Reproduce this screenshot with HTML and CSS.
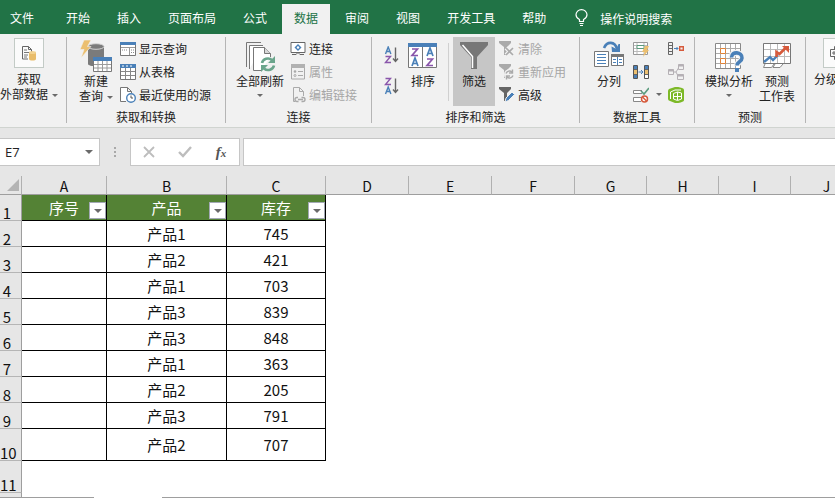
FILE: index.html
```html
<!DOCTYPE html>
<html lang="zh-CN">
<head>
<meta charset="utf-8">
<title>Excel</title>
<link rel="stylesheet" href="styles.css">
</head>
<body>
<nav class="tabs">
  <a class="tab file" href="#">文件</a>
  <a class="tab" href="#">开始</a>
  <a class="tab" href="#">插入</a>
  <a class="tab" href="#">页面布局</a>
  <a class="tab" href="#">公式</a>
  <a class="tab active" href="#">数据</a>
  <a class="tab" href="#">审阅</a>
  <a class="tab" href="#">视图</a>
  <a class="tab" href="#">开发工具</a>
  <a class="tab" href="#">帮助</a>
  <a class="tell" href="#">
    <svg width="13" height="18" viewBox="0 0 13 18" fill="none" stroke="#fff" stroke-width="1.2"><path d="M4.500 12.500v-2C2.500 9.500 1 8 1 5.800A5.300 5 0 0 1 12 5.800C12 8 10.500 9.500 8.500 10.500v2zM4.500 14.500h4M5 16.500h3"/></svg>
    操作说明搜索</a>
</nav>

<div class="ribbon">
  <section class="group g-external">
    <div class="body">
      <button class="big boxed">
        <span class="box"><svg width="16" height="16" viewBox="0 0 16 16" fill="none"><path d="M1.500 1.500h6l3 3v3M7 14H1.500V1.500M7.500 1.500v3h3" stroke="#666"/><path d="M3 5h3M3 7.500h5M3 10h4M3 12h3" stroke="#777"/><path d="M8 7.500v6.500c0 2 7 2 7 0V7.500z" fill="#e9bd6b"/><ellipse cx="11.500" cy="7.500" rx="3.500" ry="1.500" fill="#f3d392"/></svg></span>
        <span>获取</span><span class="nowrap">外部数据<i class="caret"></i></span>
      </button>
    </div>
  </section>

  <section class="group g-query">
    <div class="body">
      <button class="big">
        <svg width="32" height="32" viewBox="0 0 32 32"><path d="M8 6v18c0 3 16 3 16 0V6z" fill="#7b7b7b"/><ellipse cx="16" cy="6.500" rx="8" ry="2.800" fill="#7b7b7b" stroke="#d5d5d5"/><path d="M4 0h7L7.500 6.500H11L1 18l3-8.500H0z" fill="#ebbf70" stroke="#f1f1f1" stroke-width=".6"/><path d="M13.500 17.500h18v14h-18z" fill="#fff" stroke="#787878"/><path d="M13 17h19v4H13z" fill="#4a80b8"/><path d="M14 24.500h17M14 28h17M18 21v10M22.500 21v10M27 21v10" stroke="#9b9b9b"/></svg>
        <span>新建</span><span class="nowrap">查询<i class="caret"></i></span>
      </button>
      <div class="stack">
        <button class="small"><svg width="16" height="16" viewBox="0 0 16 16"><path d="M.5 1.500h15v13H.5z" fill="#fff" stroke="#777"/><path d="M0 1h16v3H0z" fill="#4a80b8"/><path d="M1 6.500h14M9.500 6v8" stroke="#999"/><path d="M11 9h3M11 11.500h3M2 9h5" stroke="#888" stroke-dasharray="1 1"/></svg>显示查询</button>
        <button class="small"><svg width="16" height="16" viewBox="0 0 16 16"><path d="M.5.5h15v15H.5z" fill="#fff" stroke="#777"/><path d="M0 0h16v4H0z" fill="#4a80b8"/><path d="M2 2h12" stroke="#fff" stroke-dasharray="2 2"/><path d="M1 7.500h14M1 11.500h14M5.500 4v11M10.500 4v11" stroke="#888"/></svg>从表格</button>
        <button class="small"><svg width="16" height="16" viewBox="0 0 16 16" fill="none"><path d="M6 14.500H.5V.5h7l4 4V6M7.500.5v4h4" fill="#fff" stroke="#777"/><circle cx="11" cy="11" r="4.300" fill="#fff" stroke="#4a80b8" stroke-width="1.400"/><path d="M11 8.500V11h2" stroke="#555"/></svg>最近使用的源</button>
      </div>
    </div>
    <h2>获取和转换</h2>
  </section>

  <section class="group g-connect">
    <div class="body">
      <button class="big">
        <svg width="32" height="32" viewBox="0 0 32 32" fill="none" stroke="#777"><path d="M2.500 27V2.500H17"/><path d="M5.500 29V5.500H19" fill="#fff"/><path d="M17 30.500H9.500V7.500h11l6 6V17" fill="#fff"/><path d="M20.500 7.500v6h6" fill="#d8d8d8"/><g stroke="#6ba58c" stroke-width="2.600"><path d="M18 23a6 5.500 0 0 1 10-3M30 25.500A6 5.500 0 0 1 20 28.500"/></g><path d="M31 16v7h-7zM17 32v-7h7z" fill="#6ba58c" stroke="none"/></svg>
        <span>全部刷新</span><span class="line"><i class="caret"></i></span>
      </button>
      <div class="stack">
        <button class="small"><svg width="16" height="16" viewBox="0 0 16 16"><path d="M1 1.500h14v10H1z" fill="#fff" stroke="#666"/><path d="M8 3l3.500 3.500L8 10 4.500 6.500z" fill="#4a80b8"/><circle cx="8" cy="6.500" r="1.200" fill="#fff"/><path d="M2 13.500h4c1-2 3-2 4 0h4" stroke="#666" fill="none"/></svg>连接</button>
        <button class="small" disabled><svg width="16" height="16" viewBox="0 0 16 16" fill="none"><path d="M1.500 1h13v14h-13z" stroke="#aaa"/><path d="M1 0h14v4H1z" fill="#b1b1b1"/><circle cx="5" cy="7.500" r="1.300" fill="#aaa"/><circle cx="5" cy="11.500" r="1" stroke="#aaa"/><path d="M8 7.500h5M8 11.500h5" stroke="#aaa"/></svg>属性</button>
        <button class="small" disabled><svg width="16" height="16" viewBox="0 0 16 16" fill="none" stroke="#aaa"><path d="M5 14.500H3.500V.5h6l4 4V9M9.500.5v4h4"/><path d="M8 10.500H7a2 2 0 0 0 0 4h1.500M11.500 10.500H13a2 2 0 0 1 0 4h-1.500M8 12.500h5" stroke-width="1.400"/></svg>编辑链接</button>
      </div>
    </div>
    <h2>连接</h2>
  </section>

  <section class="group g-sort">
    <div class="body">
      <div class="az">
        <button class="icon-btn" aria-label="升序"><svg width="16" height="18" viewBox="0 0 16 18" fill="none" stroke-width="1.400"><path d="M1.500 8l2.700-7 2.700 7M2.500 5.500H6" stroke="#4a80b8"/><path d="M1.500 10.500h5l-5 6h5.500" stroke="#8a56ab"/><path d="M11.500 1.500v14M9 12.500l2.500 3 2.500-3" stroke="#666"/></svg></button>
        <button class="icon-btn" aria-label="降序"><svg width="16" height="18" viewBox="0 0 16 18" fill="none" stroke-width="1.400"><path d="M1.500 1.500h5l-5 6h5.500" stroke="#8a56ab"/><path d="M1.500 17l2.700-7 2.700 7M2.500 14.500H6" stroke="#4a80b8"/><path d="M11.500 1.500v14M9 12.500l2.500 3 2.500-3" stroke="#666"/></svg></button>
      </div>
      <button class="big sort">
        <svg width="30" height="32" viewBox="0 0 30 32" fill="none"><path d="M.5 3.500h28v24H.5z" fill="#fff" stroke="#777"/><path d="M0 3h29v4H0z" fill="#4a80b8"/><path d="M14.500 7v20" stroke="#777"/><g stroke-width="1.700"><path d="M4 9h5.500L4 15.500h6M19 19h5.500L19 25.500h6" stroke="#8a56ab"/><path d="M4 26l3-8 3 8M5 23.500h4M19 16l3-8 3 8M20 13.500h4" stroke="#4a80b8"/></g></svg>
        <span>排序</span>
      </button>
      <span class="divider"></span>
      <button class="big filter">
        <svg width="28" height="32" viewBox="0 0 28 32"><path d="M0 2h28v3L17 17v12h-6V17L0 5z" fill="#777"/><path d="M2.500 5l10 11.500V28" fill="none" stroke="#fff" stroke-width="1.500"/></svg>
        <span>筛选</span>
      </button>
      <div class="stack">
        <button class="small" disabled><svg width="16" height="16" viewBox="0 0 16 16"><path d="M0 0h12v2L8 6v8H5V6L0 2z" fill="#aaa"/><path d="M7 7l7 7M14 7l-7 7" stroke="#f1f1f1" stroke-width="4"/><path d="M7 7l7 7M14 7l-7 7" stroke="#aaa" stroke-width="1.600"/></svg>清除</button>
        <button class="small" disabled><svg width="16" height="16" viewBox="0 0 16 16"><path d="M0 0h12v2L8 6v8H5V6L0 2z" fill="#aaa"/><circle cx="10.500" cy="10.500" r="5.500" fill="#f1f1f1"/><path d="M7 9.500a3.700 3.700 0 0 1 6-1.500M14 11.500a3.700 3.700 0 0 1-6 1.500M13.500 5.500V9H10M7.500 15.500V12H11" fill="none" stroke="#aaa" stroke-width="1.400"/></svg>重新应用</button>
        <button class="small"><svg width="16" height="16" viewBox="0 0 16 16"><path d="M0 0h12v2L8 6v8H5V6L0 2z" fill="#666"/><path d="M6 15l1-4 6-6 2.500 2.500-6 6z" fill="#4a80b8" stroke="#f1f1f1"/></svg>高级</button>
      </div>
    </div>
    <h2>排序和筛选</h2>
  </section>

  <section class="group g-tools">
    <div class="body">
      <button class="big">
        <svg width="32" height="32" viewBox="0 0 32 32" fill="none"><path d="M1.500 11.500h14v15h-14z" fill="#fff" stroke="#777"/><path d="M4 14.500h9M4 17.500h9M4 20.500h9M4 23.500h9" stroke="#4a80b8"/><path d="M18.500 14.500h12v11h-12z" fill="#fff" stroke="#777"/><path d="M18 14h13v3H18z" fill="#777"/><path d="M24.500 17v8M20 19.500h3M20 22.500h3M26 19.500h3M26 22.500h3" stroke="#4a80b8"/><path d="M11 8C14 1 22 1 24 9" stroke="#4a80b8" stroke-width="2.600"/><path d="M18.500 6.500l5 2.500 2-5H27v8h-8z" fill="#4a80b8"/></svg>
        <span>分列</span>
      </button>
      <div class="stack tools">
        <button class="small" aria-label="快速填充"><svg width="16" height="16" viewBox="0 0 16 16" fill="none"><path d="M.5 1.500h14v12H.5z" fill="#fff" stroke="#999"/><path d="M1 4.500h13M1 7.500h13M1 10.500h13M4 2v11M11 2v11" stroke="#bbb"/><path d="M4 4.500h7v3H4z" fill="#fff" stroke="#5b9b7d"/><path d="M12 5h4l-2 4h2l-6 7 1.500-5H9z" fill="#ebbf70"/></svg></button>
        <button class="small" aria-label="删除重复值"><svg width="16" height="16" viewBox="0 0 16 16" fill="none"><path d="M.5 1.500h4v13h-4zM11.500 1.500h4v13h-4z" fill="#fff" stroke="#555"/><path d="M1 2h3v3H1zM12 2h3v3h-3z" fill="#4a80b8"/><path d="M1 6h3v4H1zM12 6h3v4h-3z" fill="#ebbf70"/><path d="M1 11h3v3H1z" fill="#4a80b8"/><path d="M1 5.500h3M1 10.500h3M12 5.500h3M12 10.500h3" stroke="#666"/><path d="M5.500 8h4M8 6l2 2-2 2" stroke="#4a80b8"/></svg></button>
        <button class="small" aria-label="数据验证"><svg width="16" height="16" viewBox="0 0 16 16" fill="none"><path d="M9 3.500H.5v3H9M8 10.500H.5v4H8" stroke="#888" fill="#fff"/><path d="M8 4l3 3 5-6" stroke="#5b9b7d" stroke-width="1.700"/><circle cx="11.500" cy="12" r="3" fill="#fff" stroke="#d65a3c" stroke-width="1.500"/><path d="M9.500 10l4 4" stroke="#d65a3c" stroke-width="1.500"/></svg></button>
      </div>
      <span class="tool-caret"><i class="caret"></i></span>
      <div class="stack">
        <button class="small" aria-label="合并计算"><svg width="16" height="16" viewBox="0 0 16 16" fill="none"><path d="M.5 1.500h4v12h-4zM.5 4.500h4M.5 7.500h4M.5 10.500h4" stroke="#666"/><path d="M6 7.500h4M8.500 6l1.500 1.500L8.500 9" stroke="#4a80b8"/><path d="M11.700 5.700h3.600v3.600h-3.600z" stroke="#d65a3c" stroke-width="1.400"/></svg></button>
        <button class="small" aria-label="关系" disabled><svg width="16" height="16" viewBox="0 0 16 16" fill="none" stroke="#b5b0b5"><path d="M.5 5.500h5v5h-5zM10.500.5h5v5h-5zM9.500 10.500h6v5h-6zM5.500 8H8l2.500-4M8 8l2 4"/><path d="M.5 6.500h5M10.500 1.500h5M9.500 11.500h6" stroke-width="2"/></svg></button>
        <button class="small" aria-label="数据模型"><svg width="16" height="16" viewBox="0 0 16 16" fill="none"><path d="M0 4q0-1 1-2l6-2q3-.5 7 1 2 .5 2 2v10q0 1-1 1.500-4 2-8 1.500l-5-2q-2-.5-2-2z" fill="#7db928"/><path d="M2.500 12V5L7 3h6" stroke="#fff"/><path d="M5.500 6.500l4-1.500 4 1v6l-4 1.500-4-1.500zM9.500 5v8M5.500 9.500h8" stroke="#fff"/></svg></button>
      </div>
    </div>
    <h2>数据工具</h2>
  </section>

  <section class="group g-forecast">
    <div class="body">
      <button class="big">
        <svg width="32" height="32" viewBox="0 0 32 32" fill="none"><path d="M2.500 3.500h25v25h-25z" fill="#fff" stroke="#888"/><path d="M3 8.500h24M3 13.500h24M3 18.500h24M3 23.500h24M7.500 4v24M12.500 4v24M17.500 4v24M22.500 4v24" stroke="#aaa"/><path d="M7.500 8.500h5v5h-5zM7.500 18.500h5v5h-5z" fill="#fff" stroke="#e08338"/><path d="M18.500 17.500c0-7 11-5.500 10.500.5 0 4-5 3.500-5 8" stroke="#f1f1f1" stroke-width="6"/><path d="M18.500 17.500c0-7 11-5.500 10.500.5 0 4-5 3.500-5 7.500" stroke="#4a80b8" stroke-width="3.600"/><path d="M22 28h4v4h-4z" fill="#4a80b8"/></svg>
        <span>模拟分析</span><span class="line"><i class="caret"></i></span>
      </button>
      <button class="big">
        <svg width="32" height="32" viewBox="0 0 32 32" fill="none"><path d="M2.500 3.500h27v20h-27z" fill="#fff" stroke="#777"/><path d="M3 9.500h26M3 16.500h26M9.500 4v19M16.500 4v19M23.500 4v19" stroke="#bbb"/><path d="M4 24l-1.500 3.500h8L13 24M14 24l-2 3.500h7l3-3.500" stroke="#888" fill="#fff"/><path d="M3 22l6-5 3 3 5-5" stroke="#4a80b8" stroke-width="2.400"/><path d="M15.500 17V12l3 2 7-7" stroke="#d65a3c" stroke-width="2.600"/><path d="M21 6h7v7z" fill="#d65a3c"/></svg>
        <span>预测</span><span>工作表</span>
      </button>
    </div>
    <h2>预测</h2>
  </section>

  <section class="group g-outline">
    <div class="body">
      <button class="big boxed">
        <span class="box"><svg width="16" height="16" viewBox="0 0 16 16" fill="none" stroke="#666"><path d="M4.500 4V1.500h11v13h-11V12M.5 4.500h7v7h-7zM2 8h4M4 6v4"/></svg></span>
        <span>分级显示</span>
      </button>
    </div>
  </section>
</div>

<div class="formula">
  <div class="namebox"><input type="text" value="E7" aria-label="名称框"><i class="caret wide"></i></div>
  <span class="dots"></span>
  <div class="entry">
    <button aria-label="取消"><svg width="14" height="14" viewBox="0 0 14 14"><path d="M2 2l10 10M12 2L2 12" stroke="#bdbdbd" stroke-width="1.800"/></svg></button>
    <button aria-label="输入"><svg width="14" height="14" viewBox="0 0 14 14"><path d="M1 7l4 4 8-9" fill="none" stroke="#bdbdbd" stroke-width="2.400"/></svg></button>
    <button class="fx" aria-label="插入函数">f<small>x</small></button>
  </div>
  <input class="bar" type="text" aria-label="编辑栏">
</div>

<main class="sheet">
<table>
  <colgroup><col class="c-head"><col class="c-a"><col class="c-b"><col class="c-c"><col class="c-wide" span="3"><col class="c-std" span="4"></colgroup>
  <thead><tr><th class="corner"><svg width="12" height="12" viewBox="0 0 12 12"><path d="M12 0v12H0z" fill="#b3b3b3"/></svg></th><th>A</th><th>B</th><th>C</th><th>D</th><th>E</th><th>F</th><th>G</th><th>H</th><th>I</th><th>J</th></tr></thead>
  <tbody>
    <tr class="title"><th>1</th><td>序号<button class="drop" aria-label="筛选序号"><i class="caret wide"></i></button></td><td>产品<button class="drop" aria-label="筛选产品"><i class="caret wide"></i></button></td><td>库存<button class="drop" aria-label="筛选库存"><i class="caret wide"></i></button></td></tr>
    <tr><th>2</th><td></td><td>产品1</td><td>745</td></tr>
    <tr><th>3</th><td></td><td>产品2</td><td>421</td></tr>
    <tr><th>4</th><td></td><td>产品1</td><td>703</td></tr>
    <tr><th>5</th><td></td><td>产品3</td><td>839</td></tr>
    <tr><th>6</th><td></td><td>产品3</td><td>848</td></tr>
    <tr><th>7</th><td></td><td>产品1</td><td>363</td></tr>
    <tr><th>8</th><td></td><td>产品2</td><td>205</td></tr>
    <tr><th>9</th><td></td><td>产品3</td><td>791</td></tr>
    <tr class="tall"><th>10</th><td></td><td>产品2</td><td>707</td></tr>
    <tr class="tall"><th>11</th></tr>
    <tr><th></th></tr>
  </tbody>
</table>
</main>
<footer class="edge"><span class="sheet-tab"></span></footer>
</body>
</html>
```
FILE: styles.css
```css
* { box-sizing: border-box; }

body {
  margin: 0;
  height: 100vh;
  display: flex;
  flex-direction: column;
  overflow: hidden;
  background: #fff;
  color: #222;
  font: 12px/15px "Noto Sans CJK SC", sans-serif;
}

button, input { font: inherit; color: inherit; border: 0; background: none; padding: 0; margin: 0; }
svg { display: block; flex: none; }
a { color: inherit; text-decoration: none; }

/* Tab strip */
.tabs {
  flex: none;
  display: flex;
  gap: 3px;
  height: 34px;
  padding-top: 4px;
  background: #217346;
  color: #fff;
  white-space: nowrap;
}
.tab { padding: 6px 12px; }
.tab.file { padding: 6px 17px 6px 10px; }
.tab.active { background: #f1f1f1; color: #217346; }
.tell { display: flex; align-items: center; gap: 12px; margin-left: 14px; padding-bottom: 2px; }

/* Ribbon */
.ribbon {
  flex: none;
  display: flex;
  height: 94px;
  padding: 3px 0 4px;
  overflow: hidden;
  background: #f1f1f1;
  border-bottom: 1px solid #d0d4d0;
  white-space: nowrap;
}
.group { flex: none; display: flex; flex-direction: column; border-right: 1px solid #b5b5b5; }
.body { display: flex; height: 74px; }
.group h2 { margin: 0; font-size: 12px; line-height: 12px; font-weight: 400; text-align: center; }

.g-external { width: 67px; }
.g-query { width: 159px; }
.g-connect { width: 146px; }
.g-sort { width: 208px; }
.g-tools { width: 115px; }
.g-forecast { width: 111px; }
.g-outline { border: 0; }
.g-query .body { padding-left: 12px; gap: 7px; }
.g-connect .body { padding-left: 10px; gap: 6px; }
.g-sort .body { padding-left: 12px; }
.g-tools .body { padding-left: 13px; }
.g-forecast .body { padding-left: 10px; gap: 6px; }
.g-outline .body { padding-left: 8px; }

.big { display: flex; flex-direction: column; align-items: center; height: 69px; padding-top: 3px; }
.big svg { margin-bottom: 1px; }
.big .line { display: flex; align-items: center; height: 15px; }
.boxed { padding-top: 1px; }
.box {
  display: grid;
  place-items: center;
  width: 30px;
  height: 30px;
  margin-bottom: 3px;
  background: #fbfbfb;
  border: 1px solid #c3cbc6;
}
.box svg { margin: 0; }

.stack { display: flex; flex-direction: column; }
.small { display: flex; align-items: center; gap: 3px; height: 23px; }
.small:disabled { color: #a6a6a6; }

.caret {
  display: inline-block;
  border: 3px solid transparent;
  border-top-color: #6a6a6a;
  border-bottom: 0;
  vertical-align: middle;
}
.nowrap .caret { margin-left: 4px; }
.caret.wide { border-width: 4px 4px 0; }

.az { display: flex; flex-direction: column; gap: 13px; padding-top: 9px; }
.sort { margin: 0 10px 0 8px; }
.divider { width: 1px; height: 58px; margin: 6px 4px 0 0; background: #d0d0d0; }
.filter { width: 42px; margin-right: 4px; background: #c6c6c6; }
.tools { margin-left: 8px; }
.tool-caret { align-self: flex-start; width: 19px; padding-top: 48px; text-align: center; }

/* Formula bar */
.formula {
  flex: none;
  display: flex;
  align-items: center;
  height: 48px;
  background: #e6e6e6;
}
.namebox, .entry, .bar { height: 28px; background: #fff; border: 1px solid #c6c6c6; }
.namebox { display: flex; align-items: center; width: 100px; padding: 0 6px 0 5px; border-left: 0; }
.namebox input { flex: 1; min-width: 0; font: 13px/15px "Open Sans", sans-serif; }
.dots { width: 2px; height: 10px; margin: 0 14px; background: repeating-linear-gradient(#a8a8a8 0 2px, transparent 2px 4px); }
.entry { display: flex; align-items: center; justify-content: space-around; width: 110px; }
.entry button { width: 16px; display: grid; place-items: center; }
.entry .fx { display: block; font: italic bold 15px/20px "Liberation Serif", serif; color: #555; }
.fx small { font-size: 11px; }
.bar { flex: 1; min-width: 0; margin-left: 3px; border-right: 0; padding: 0 6px; }

/* Worksheet */
.sheet { flex: 1; min-height: 0; overflow: hidden; }
table { width: 863px; table-layout: fixed; border-collapse: separate; border-spacing: 0; font-size: 15px; line-height: 18px; color: #111; }
.c-head { width: 22px; }
.c-a { width: 85px; }
.c-b { width: 120px; }
.c-c { width: 99px; }
.c-wide { width: 83px; }
.c-std { width: 72px; }
th, td { padding: 0; text-align: center; font-weight: 400; }
thead th {
  height: 19px;
  font-size: 14px;
  line-height: 15px;
  vertical-align: bottom;
  background: #e6e6e6;
  border-right: 1px solid #b0b0b0;
  border-bottom: 1px solid #9e9e9e;
}
.corner { padding: 0 3px 3px 7px; }
tbody tr { height: 26px; }
tbody tr.tall { height: 32px; }
tbody th {
  padding-right: 7px;
  line-height: 15px;
  vertical-align: bottom;
  background: #e6e6e6;
  border-right: 1px solid #9e9e9e;
  border-bottom: 1px solid #b5b5b5;
}
tbody td { position: relative; border-right: 1px solid #000; border-bottom: 1px solid #000; }
.title td { background: #548235; color: #fff; }
.drop {
  position: absolute;
  right: 0;
  bottom: 1px;
  display: grid;
  place-items: center;
  width: 17px;
  height: 17px;
  background: #fff;
  border: 1px solid #a3a9b5;
}

.edge { flex: none; display: flex; height: 1px; padding-left: 94px; background: #9e9e9e; }
.sheet-tab { width: 68px; background: #fff; }
```
